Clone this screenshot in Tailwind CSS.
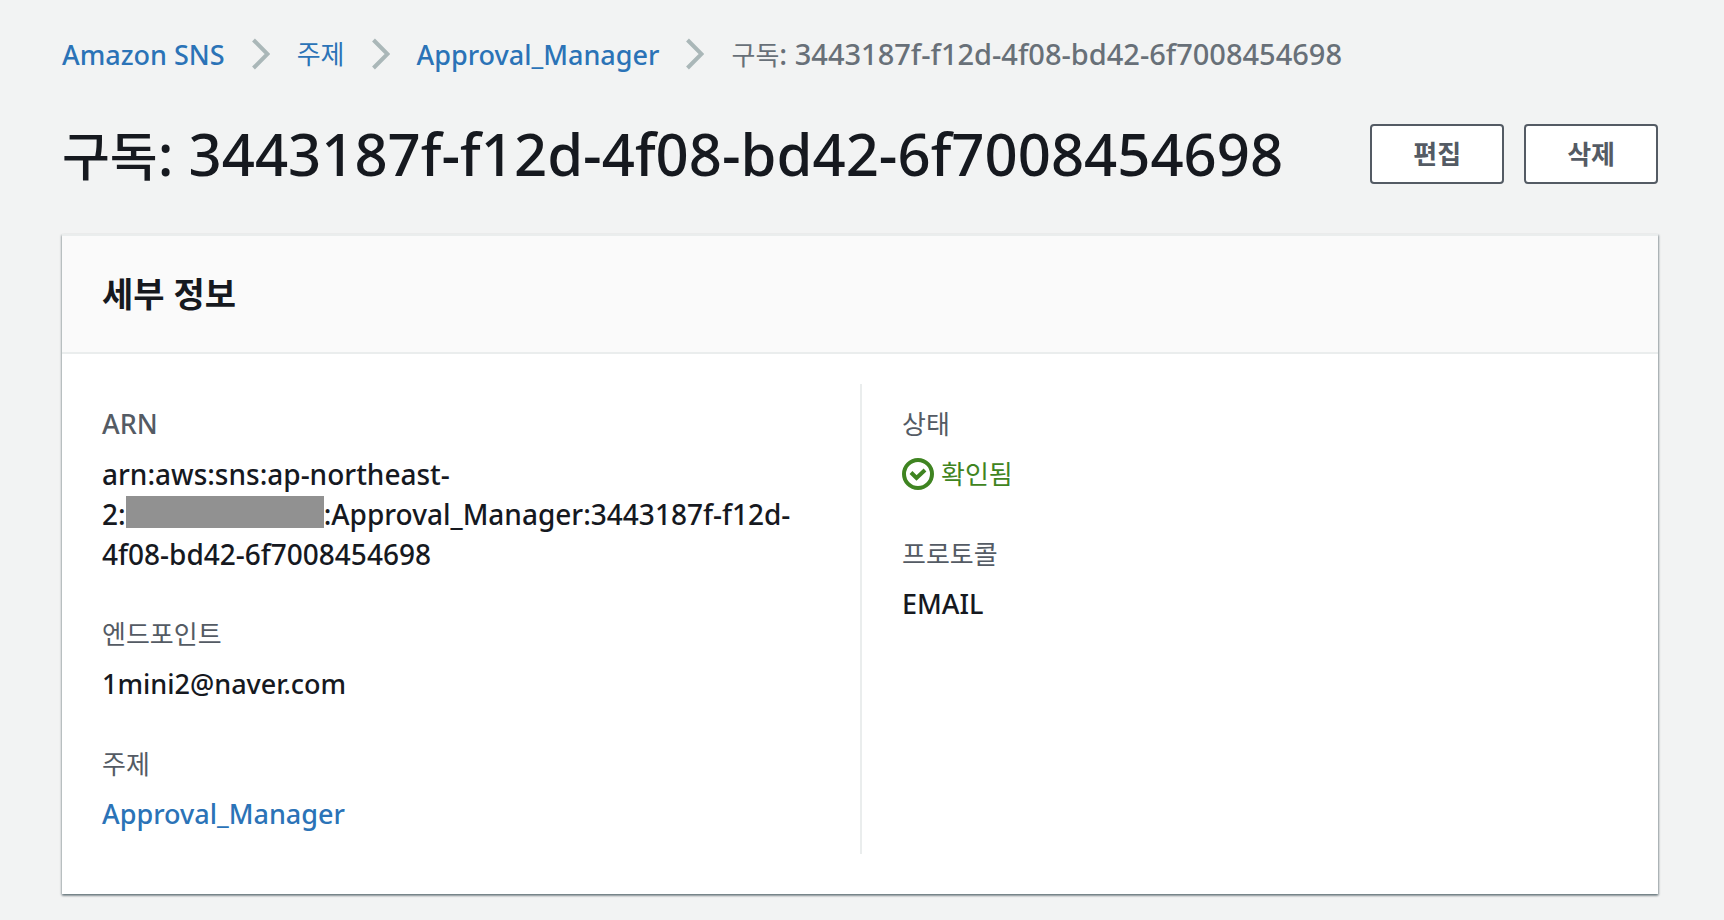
<!DOCTYPE html>
<html lang="ko">
<head>
<meta charset="utf-8">
<meta name="viewport" content="width=device-width, initial-scale=1">
<title>Amazon SNS</title>
<script src="https://cdn.jsdelivr.net/npm/@tailwindcss/browser@4"></script>
</head>
<body class="min-h-screen bg-[#f2f3f3] pl-[62px] pr-[66px] pt-[34px] pb-[26px] font-['Noto_Sans','Noto_Sans_CJK_KR',sans-serif] text-[28px] leading-[40px] font-medium text-[#16191f]">
  <nav aria-label="breadcrumb">
    <ol class="flex h-10 items-center gap-[27px] whitespace-nowrap">
      <li><a href="#" class="text-[27px] text-[#2b73b7]">Amazon SNS</a></li>
      <li aria-hidden="true"><svg class="block h-[32px] w-[18px]" viewBox="0 0 18 32" fill="none" stroke="#aab7b8" stroke-width="4"><path d="M1.500 2 15.500 16 1.500 30"/></svg></li>
      <li class="text-[26px] font-normal"><a href="#" class="text-[#2b73b7]">주제</a></li>
      <li aria-hidden="true"><svg class="block h-[32px] w-[18px]" viewBox="0 0 18 32" fill="none" stroke="#aab7b8" stroke-width="4"><path d="M1.500 2 15.500 16 1.500 30"/></svg></li>
      <li><a href="#" class="text-[27px] text-[#2b73b7]">Approval_Manager</a></li>
      <li aria-hidden="true"><svg class="block h-[32px] w-[18px]" viewBox="0 0 18 32" fill="none" stroke="#aab7b8" stroke-width="4"><path d="M1.500 2 15.500 16 1.500 30"/></svg></li>
      <li class="text-[29px] text-[#687078]" aria-current="page"><span class="text-[26px] leading-none font-normal">구독</span>: 3443187f-f12d-4f08-bd42-6f7008454698</li>
    </ol>
  </nav>

  <header class="mt-10 flex items-center justify-between gap-5">
    <h1 class="whitespace-nowrap text-[58px] leading-[80px]"><span class="text-[52px] leading-none">구독</span>: 3443187f-f12d-4f08-bd42-6f7008454698</h1>
    <div class="flex shrink-0 gap-5">
      <button type="button" class="rounded-[4px] border-2 border-[#545b64] bg-white px-[41px] py-2 text-[26px] font-bold text-[#545b64]">편집</button>
      <button type="button" class="rounded-[4px] border-2 border-[#545b64] bg-white px-[41px] py-2 text-[26px] font-bold text-[#545b64]">삭제</button>
    </div>
  </header>

  <section class="mt-10 border-t-2 border-[#eaeded] bg-white shadow-[0_2px_2px_0_rgba(0,28,36,0.3),1px_1px_2px_0_rgba(0,28,36,0.3),-1px_1px_2px_0_rgba(0,28,36,0.2)]">
    <div class="border-b-2 border-[#eaeded] bg-[#fafafa] px-10 py-[34px]">
      <h2 class="text-[34px] leading-[48px] font-bold">세부 정보</h2>
    </div>
    <div class="grid grid-cols-2 pt-[30px] pb-10">
      <dl class="flex flex-col gap-10 px-10 py-5">
        <div class="flex flex-col gap-[10px]">
          <dt class="text-[27px] text-[#545b64]">ARN</dt>
          <dd>arn:aws:sns:ap-northeast-<br>2:<span class="inline-block h-8 w-[198px] bg-[#919191] align-[-3px]"></span>:Approval_Manager:3443187f-f12d-<br>4f08-bd42-6f7008454698</dd>
        </div>
        <div class="flex flex-col gap-[10px]">
          <dt class="text-[26px] font-normal text-[#545b64]">엔드포인트</dt>
          <dd class="text-[27px]">1mini2@naver.com</dd>
        </div>
        <div class="flex flex-col gap-[10px]">
          <dt class="text-[26px] font-normal text-[#545b64]">주제</dt>
          <dd class="text-[27px]"><a href="#" class="text-[#2b73b7]">Approval_Manager</a></dd>
        </div>
      </dl>
      <dl class="flex flex-col gap-10 border-l-2 border-[#eaeded] px-10 py-5">
        <div class="flex flex-col gap-[10px]">
          <dt class="text-[26px] font-normal text-[#545b64]">상태</dt>
          <dd class="flex items-center gap-[7px] text-[26px] font-normal text-[#3f8421]">
            <svg class="size-8" viewBox="0 0 32 32" fill="none" stroke="currentColor" stroke-width="4" aria-hidden="true"><circle cx="16" cy="16" r="14"/><path d="m9 14.500 5.500 5.500 8.500-8"/></svg>
            확인됨
          </dd>
        </div>
        <div class="flex flex-col gap-[10px]">
          <dt class="text-[26px] font-normal text-[#545b64]">프로토콜</dt>
          <dd class="text-[27px]">EMAIL</dd>
        </div>
      </dl>
    </div>
  </section>
</body>
</html>
